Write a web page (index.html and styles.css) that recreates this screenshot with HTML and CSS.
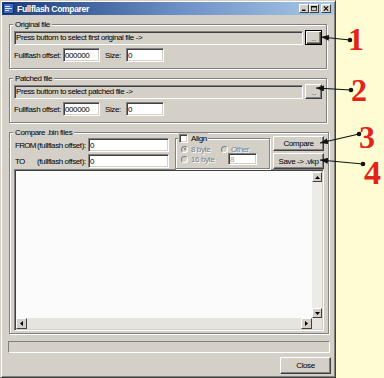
FILE: index.html
```html
<!DOCTYPE html>
<html lang="en">
<head>
    <meta charset="UTF-8">
    <title>Fullflash Comparer</title>
    <link rel="stylesheet" href="styles.css">
</head>
<body>
<div class="page">
    <div class="window">
        <div class="titlebar">
            <svg class="app-icon" width="11" height="11" viewBox="0 0 11 11">
                <rect x="0.5" y="0.5" width="10" height="10" fill="#3e6cc0" stroke="#16306c"/>
                <path d="M2 3.5h5M2 5.5h7M2 7.5h4" stroke="#dfe8ff" stroke-width="1"/>
            </svg>
            <span class="title">Fullflash Comparer</span>
            <div class="caption">
                <span class="cap-btn">
                    <svg width="8" height="7" viewBox="0 0 8 7"><rect x="1" y="5" width="5" height="2" fill="#000"/></svg>
                </span>
                <span class="cap-btn">
                    <svg width="8" height="7" viewBox="0 0 8 7"><path d="M0.5 0.5h7v6h-7z" fill="none" stroke="#000"/><rect x="0" y="0" width="8" height="2" fill="#000"/></svg>
                </span>
                <span class="cap-btn close-btn">
                    <svg width="8" height="7" viewBox="0 0 8 7"><path d="M1 0.5l6 6M7 0.5l-6 6" stroke="#000" stroke-width="1.5"/></svg>
                </span>
            </div>
        </div>

        <div class="client">
            <div class="group file-group">
                <div class="legend">Original file</div>
                <div class="path-row">
                    <div class="path-field">Press buttom to select first original file -&gt;</div>
                    <button class="btn browse default">...</button>
                </div>
                <div class="offset-row">
                    <label class="offset-label">Fullflash offset:</label>
                    <input class="edit offset" value="000000">
                    <label class="size-label">Size:</label>
                    <input class="edit size" value="0">
                </div>
            </div>

            <div class="group file-group">
                <div class="legend">Patched file</div>
                <div class="path-row">
                    <div class="path-field">Press buttom to select patched file -&gt;</div>
                    <button class="btn browse">...</button>
                </div>
                <div class="offset-row">
                    <label class="offset-label">Fullflash offset:</label>
                    <input class="edit offset" value="000000">
                    <label class="size-label">Size:</label>
                    <input class="edit size" value="0">
                </div>
            </div>

            <div class="group compare-group">
                <div class="legend">Compare .bin files</div>
                <div class="compare-top">
                    <div class="range">
                        <div class="range-row">
                            <label class="range-label"><span class="range-key">FROM</span>(fullflash offset):</label>
                            <input class="edit range-input" value="0">
                        </div>
                        <div class="range-row">
                            <label class="range-label"><span class="range-key">TO</span>(fullflash offset):</label>
                            <input class="edit range-input" value="0">
                        </div>
                    </div>

                    <div class="group align-group">
                        <div class="legend align-legend"><span class="checkbox"></span>Align</div>
                        <div class="align-row">
                            <span class="option"><span class="radio checked"></span>8 byte</span>
                            <span class="option"><span class="radio"></span>Other</span>
                        </div>
                        <div class="align-row second">
                            <span class="option"><span class="radio"></span>16 byte</span>
                            <input class="edit other-input" value="8" disabled>
                        </div>
                    </div>

                    <div class="actions">
                        <button class="btn compare-btn">Compare</button>
                        <button class="btn save-btn">Save -&gt; .vkp</button>
                    </div>
                </div>

                <div class="textbox">
                    <div class="text-area"></div>
                    <div class="vscroll">
                        <span class="arrow"><svg width="5" height="3" viewBox="0 0 5 3"><path d="M2.5 0L5 3H0z" fill="#000"/></svg></span>
                        <span class="arrow"><svg width="5" height="3" viewBox="0 0 5 3"><path d="M0 0h5L2.5 3z" fill="#000"/></svg></span>
                    </div>
                    <div class="hscroll">
                        <span class="arrow"><svg width="3" height="5" viewBox="0 0 3 5"><path d="M3 0v5L0 2.5z" fill="#000"/></svg></span>
                        <span class="arrow"><svg width="3" height="5" viewBox="0 0 3 5"><path d="M0 0l3 2.5L0 5z" fill="#000"/></svg></span>
                    </div>
                    <div class="corner"></div>
                </div>
            </div>

            <div class="progress"></div>
            <button class="btn close">Close</button>
        </div>
    </div>

    <svg class="callouts" width="384" height="378" viewBox="0 0 384 378">
        <defs>
            <marker id="head" viewBox="0 0 8 6" refX="8" refY="3" markerWidth="8" markerHeight="6" markerUnits="userSpaceOnUse" orient="auto">
                <path d="M0 0L8 3L0 6z" fill="#111"/>
            </marker>
        </defs>
        <g stroke="#111" stroke-width="1.2" marker-end="url(#head)">
            <line x1="350" y1="40" x2="321" y2="37"/>
            <line x1="351" y1="90" x2="316" y2="88"/>
            <line x1="359" y1="134" x2="320" y2="143"/>
            <line x1="363" y1="164" x2="320" y2="160"/>
        </g>
        <g fill="#111">
            <circle cx="350" cy="40" r="2.3"/>
            <circle cx="351" cy="90" r="2.3"/>
            <circle cx="359" cy="134" r="2.3"/>
            <circle cx="363" cy="164" r="2.3"/>
        </g>
        <g class="num">
            <text x="348" y="50">1</text>
            <text x="351" y="101">2</text>
            <text x="359" y="148">3</text>
            <text x="364" y="184" class="big">4</text>
        </g>
    </svg>
</div>
</body>
</html>
```

FILE: styles.css
```css
body {
    margin: 0;
    background: #fefcd2;
    font-family: 'Liberation Sans', Arial, sans-serif;
    font-size: 8px;
    letter-spacing: -0.4px;
    color: #000;
}

.page {
    position: relative;
    width: 384px;
    height: 378px;
}

.window {
    box-sizing: border-box;
    width: 336px;
    height: 378px;
    padding: 1px;
    background: #d4d0c8;
    border: 1px solid;
    border-color: #d4d0c8 #404040 #404040 #d4d0c8;
    box-shadow: inset 1px 1px #fff, inset -1px -1px #808080;
    display: flex;
    flex-direction: column;
}

/* title bar */
.titlebar {
    height: 13px;
    display: flex;
    align-items: center;
    background: linear-gradient(to right, #1b3c7a, #6f92c8 55%, #a9c8e6);
}

.app-icon {
    margin-left: 1px;
    flex: none;
}

.title {
    margin-left: 3px;
    color: #fff;
    font-weight: bold;
    font-size: 8.5px;
    letter-spacing: -0.3px;
}

.caption {
    margin-left: auto;
    margin-right: 3px;
    display: flex;
}

.cap-btn {
    box-sizing: border-box;
    width: 10px;
    height: 9px;
    display: flex;
    align-items: center;
    justify-content: center;
    background: #d4d0c8;
    border: 1px solid;
    border-color: #fff #404040 #404040 #fff;
}

.cap-btn svg {
    width: 6px;
    height: 5px;
}

.close-btn {
    margin-left: 2px;
}

/* client area */
.client {
    flex: 1;
    display: flex;
    flex-direction: column;
    padding: 0 7px;
}

.group {
    box-sizing: border-box;
    border: 1px solid #808080;
    box-shadow: inset 1px 1px #fff, 1px 1px #fff;
}

.legend {
    width: fit-content;
    height: 11px;
    line-height: 11px;
    margin: -11px 0 0 -1px;
    padding: 0 2px;
    background: #d4d0c8;
}

.file-group {
    width: 318px;
    height: 45px;
    margin-top: 9px;
    padding: 5px 4px 6px;
}

.path-row {
    display: flex;
    gap: 2px;
    height: 15px;
}

.path-field {
    flex: 1;
    box-sizing: border-box;
    height: 14px;
    margin-top: 1px;
    padding-left: 1px;
    line-height: 11px;
    border: 1px solid;
    border-color: #808080 #fff #fff #808080;
    box-shadow: inset 1px 1px #404040, inset -1px -1px #d4d0c8;
    white-space: nowrap;
    overflow: hidden;
}

.btn {
    box-sizing: border-box;
    padding: 0;
    margin: 0;
    font: inherit;
    letter-spacing: inherit;
    color: #000;
    background: #d4d0c8;
    border: 1px solid;
    border-color: #fff #404040 #404040 #fff;
    box-shadow: inset -1px -1px #808080, inset 1px 1px #d4d0c8;
}

.browse {
    width: 17px;
    height: 15px;
    line-height: 16px;
    color: #555;
    font-size: 7px;
}

.browse.default {
    border-color: #000;
    box-shadow: inset 1px 1px #fff, inset -1px -1px #404040, inset -2px -2px #808080;
}

.offset-row {
    display: flex;
    align-items: center;
    height: 14px;
    margin-top: 3px;
}

.edit {
    box-sizing: border-box;
    height: 14px;
    padding: 0 1px;
    margin: 0;
    font: inherit;
    letter-spacing: inherit;
    color: #000;
    background: #fff;
    border: 1px solid;
    border-color: #808080 #fff #fff #808080;
    box-shadow: inset 1px 1px #404040, inset -1px -1px #d4d0c8;
    outline: none;
}

.offset-label {
    width: 49px;
    white-space: nowrap;
}

.offset {
    width: 37px;
}

.size-label {
    width: 21px;
    margin-left: 5px;
}

.size {
    width: 38px;
}

/* compare group */
.compare-group {
    width: 320px;
    height: 202px;
    margin-top: 9px;
    padding: 5px 4px 2px;
}

.compare-top {
    display: flex;
    height: 31px;
}

.range {
    width: 155px;
    display: flex;
    flex-direction: column;
    gap: 2px;
    margin-right: 6px;
}

.range-row {
    display: flex;
    align-items: center;
    height: 14px;
}

.range-label {
    width: 74px;
    white-space: nowrap;
    padding-left: 1px;
}

.range-key {
    display: inline-block;
    width: 22px;
    letter-spacing: -0.7px;
}

.range-input {
    width: 81px;
}

.align-group {
    width: 95px;
    height: 31px;
    margin-right: 3px;
    padding: 5px 2px 3px 5px;
}

.align-legend {
    display: flex;
    align-items: center;
    gap: 3px;
    margin-left: -3px;
    padding: 0 1px;
}

.checkbox {
    box-sizing: border-box;
    width: 9px;
    height: 9px;
    background: #fff;
    border: 1px solid;
    border-color: #808080 #fff #fff #808080;
    box-shadow: inset 1px 1px #404040, inset -1px -1px #d4d0c8;
}

.align-row {
    display: flex;
    align-items: center;
    height: 10px;
}

.align-row.second {
    height: 12px;
    margin-top: -1px;
}

.option {
    display: flex;
    align-items: center;
    gap: 3px;
    width: 40px;
    color: #808080;
    text-shadow: 1px 1px #fff;
}

.radio {
    box-sizing: border-box;
    width: 7px;
    height: 7px;
    border-radius: 50%;
    background: #d4d0c8;
    border: 1px solid;
    border-color: #808080 #fff #fff #808080;
    position: relative;
}

.radio.checked::after {
    content: "";
    position: absolute;
    left: 1.5px;
    top: 1.5px;
    width: 2px;
    height: 2px;
    border-radius: 50%;
    background: #808080;
}

.other-input {
    width: 29px;
    height: 12px;
    margin-left: 7px;
    color: #a0a0a0;
}

.actions {
    width: 51px;
    display: flex;
    flex-direction: column;
}

.compare-btn {
    height: 15px;
    margin-top: -2px;
}

.save-btn {
    height: 16px;
    margin-top: 2px;
}

.textbox {
    box-sizing: border-box;
    height: 162px;
    display: grid;
    grid-template-columns: 1fr 10px;
    grid-template-rows: 1fr 11px;
    border: 1px solid;
    border-color: #808080 #fff #fff #808080;
    box-shadow: inset 1px 1px #404040, inset -1px -1px #d4d0c8;
    padding: 1px;
}

.text-area {
    background: #fbfbfb;
}

.vscroll {
    background: #ecebe6;
    display: flex;
    flex-direction: column;
    justify-content: space-between;
    padding-top: 1px;
}

.hscroll {
    background: #e6e4df;
    display: flex;
    justify-content: space-between;
}

.corner {
    background: #e6e4df;
}

.arrow {
    box-sizing: border-box;
    width: 10px;
    height: 10px;
    display: flex;
    align-items: center;
    justify-content: center;
    background: #d4d0c8;
    border: 1px solid;
    border-color: #fff #404040 #404040 #fff;
}

.hscroll .arrow {
    height: 11px;
    width: 11px;
}

/* bottom */
.progress {
    box-sizing: border-box;
    width: 322px;
    height: 12px;
    margin: 7px 0 0 -1px;
    border: 1px solid;
    border-color: #808080 #fff #fff #808080;
}

.close {
    align-self: flex-end;
    width: 51px;
    height: 17px;
    margin: 4px -4px 0 0;
}

/* annotation overlay */
.callouts {
    position: absolute;
    left: 0;
    top: 0;
    pointer-events: none;
}

.num text {
    font-family: 'Liberation Serif', serif;
    font-weight: bold;
    font-size: 32px;
    letter-spacing: 0;
    fill: #e2231a;
}

.num .big {
    font-size: 34px;
}
```
